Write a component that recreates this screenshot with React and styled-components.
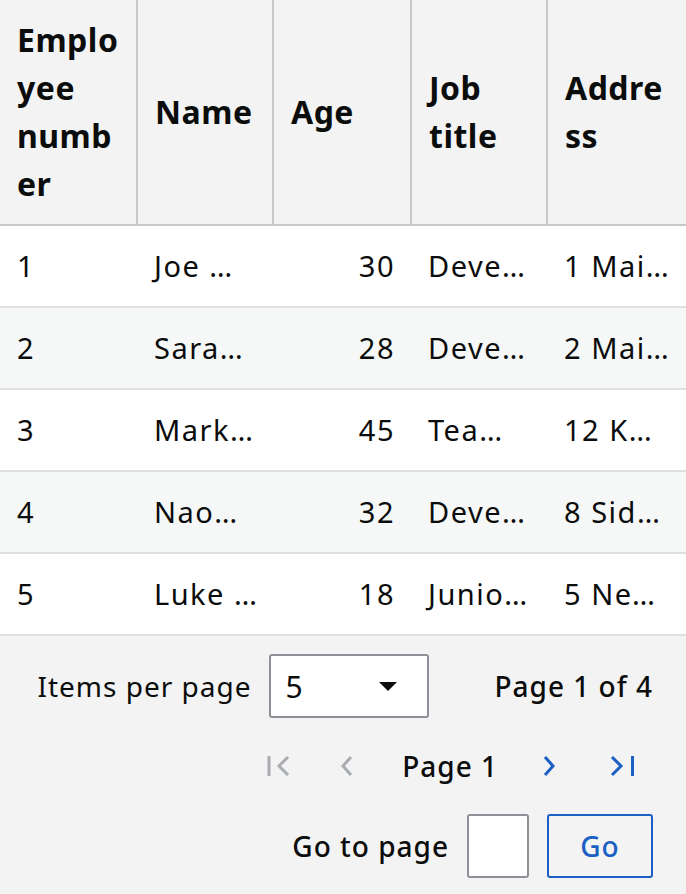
import React, { useState } from "react";
import styled, { createGlobalStyle } from "styled-components";

const GlobalStyle = createGlobalStyle`
  html, body {
    margin: 0;
    padding: 0;
    background: #f3f3f3;
  }
  body {
    font-family: "Noto Sans", "Open Sans", sans-serif;
    color: #0b0c0c;
  }
`;

const Wrapper = styled.div`
  width: 686px;
  height: 894px;
  overflow: hidden;
  background: #f3f3f3;
`;

const Table = styled.table`
  width: 100%;
  table-layout: fixed;
  border-collapse: collapse;
`;

const HeadCell = styled.th`
  height: 192px;
  padding: 16px 16px 16px 17px;
  text-align: left;
  vertical-align: middle;
  font-size: 32px;
  line-height: 48px;
  font-weight: 700;
  letter-spacing: 0.5px;
  background: #f3f3f3;
  border-bottom: 2px solid #c6c9cc;
  border-right: ${(p) => (p.last ? "none" : "2px solid #c6c9cc")};
  overflow-wrap: anywhere;
  word-break: break-word;
`;

const Row = styled.tr`
  background: ${(p) => (p.striped ? "#f6f8f7" : "#ffffff")};
  border-bottom: 2px solid #dfe1e0;
`;

const Cell = styled.td`
  height: 80px;
  padding: 0 ${(p) => p.pr || 16}px 0 17px;
  font-size: 29px;
  line-height: 40px;
  letter-spacing: 1.5px;
  text-align: ${(p) => (p.numeric ? "right" : "left")};
  white-space: nowrap;
  overflow: hidden;
  text-overflow: ellipsis;
`;

const Footer = styled.div`
  display: flex;
  flex-direction: column;
  align-items: flex-end;
  gap: 24px;
  padding: 18px 33px 16px 16px;
  font-size: 28px;
  letter-spacing: 1px;
`;

const FooterRow = styled.div`
  display: flex;
  align-items: center;
  justify-content: flex-end;
  gap: 18px;
`;

const Label = styled.span`
  font-weight: ${(p) => (p.medium ? 500 : 400)};
`;

const SelectBox = styled.div`
  box-sizing: border-box;
  width: 160px;
  height: 64px;
  display: flex;
  align-items: center;
  justify-content: space-between;
  padding: 0 30px 0 14px;
  background: #fff;
  border: 2px solid #8d9096;
  border-radius: 3px;
  font-size: 30px;
  margin-right: 47px;
`;

const Caret = styled.span`
  width: 0;
  height: 0;
  border-left: 9px solid transparent;
  border-right: 9px solid transparent;
  border-top: 9px solid #0b0c0c;
`;

const Nav = styled.div`
  display: flex;
  align-items: center;
  height: 48px;
  margin-right: 7px;
`;

const IconButton = styled.button`
  width: 48px;
  height: 48px;
  display: flex;
  align-items: center;
  justify-content: center;
  border: none;
  background: none;
  padding: 0;
  margin-left: ${(p) => p.ml || 0}px;
  color: ${(p) => (p.disabled ? "#a9adb1" : "#1c5fc4")};
`;

const PageText = styled.span`
  font-size: 28px;
  font-weight: 500;
  margin: 0 27px 0 31px;
`;

const PageInput = styled.input`
  box-sizing: border-box;
  width: 62px;
  height: 64px;
  border: 2px solid #8d9096;
  border-radius: 3px;
  background: #fff;
`;

const GoButton = styled.button`
  box-sizing: border-box;
  width: 106px;
  height: 64px;
  border: 2px solid #1c5fc4;
  border-radius: 3px;
  background: transparent;
  color: #1c5fc4;
  font-family: inherit;
  font-size: 28px;
  font-weight: 500;
  letter-spacing: 1px;
`;

const FirstIcon = () => (
  <svg width="24" height="22" viewBox="0 0 24 22">
    <path d="M2 1v20" stroke="currentColor" strokeWidth="3" fill="none" />
    <path d="M21 2l-9 9 9 9" stroke="currentColor" strokeWidth="3" fill="none" />
  </svg>
);

const PrevIcon = () => (
  <svg width="16" height="22" viewBox="0 0 16 22">
    <path d="M12 2l-8 9 8 9" stroke="currentColor" strokeWidth="3" fill="none" />
  </svg>
);

const NextIcon = () => (
  <svg width="16" height="22" viewBox="0 0 16 22">
    <path d="M4 2l8 9-8 9" stroke="currentColor" strokeWidth="3" fill="none" />
  </svg>
);

const LastIcon = () => (
  <svg width="26" height="22" viewBox="0 0 26 22">
    <path d="M3 2l9 9-9 9" stroke="currentColor" strokeWidth="3" fill="none" />
    <path d="M23.5 1v20" stroke="currentColor" strokeWidth="3" fill="none" />
  </svg>
);

const employees = [
  { id: 1, name: "Joe Wilson", age: 30, job: "Developer", address: "1 Main Street" },
  { id: 2, name: "Sarah Smith", age: 28, job: "Developer", address: "2 Main Street" },
  { id: 3, name: "Mark Jones", age: 45, job: "Team lead", address: "12 Kowloon Road" },
  { id: 4, name: "Naomi Brown", age: 32, job: "Developer", address: "8 Side Lane" },
  { id: 5, name: "Luke Green", age: 18, job: "Junior developer", address: "5 New Road" },
];

const columns = [
  { title: "Employee number", width: 137 },
  { title: "Name", width: 136 },
  { title: "Age", width: 138 },
  { title: "Job title", width: 136 },
  { title: "Address", width: 139 },
];

export default function App() {
  const [goTo, setGoTo] = useState("");

  return (
    <Wrapper>
      <GlobalStyle />
      <Table>
        <colgroup>
          {columns.map((c) => (
            <col key={c.title} width={c.width} />
          ))}
        </colgroup>
        <thead>
          <tr>
            {columns.map((c, i) => (
              <HeadCell key={c.title} last={i === columns.length - 1}>
                {c.title}
              </HeadCell>
            ))}
          </tr>
        </thead>
        <tbody>
          {employees.map((e, i) => (
            <Row key={e.id} striped={i % 2 === 1}>
              <Cell>{e.id}</Cell>
              <Cell>{e.name}</Cell>
              <Cell numeric>{e.age}</Cell>
              <Cell pr={18}>{e.job}</Cell>
              <Cell>{e.address}</Cell>
            </Row>
          ))}
        </tbody>
      </Table>
      <Footer>
        <FooterRow>
          <Label>Items per page</Label>
          <SelectBox>
            5
            <Caret />
          </SelectBox>
          <Label medium>Page 1 of 4</Label>
        </FooterRow>
        <Nav>
          <IconButton disabled>
            <FirstIcon />
          </IconButton>
          <IconButton disabled ml={20}>
            <PrevIcon />
          </IconButton>
          <PageText>Page 1</PageText>
          <IconButton>
            <NextIcon />
          </IconButton>
          <IconButton ml={25}>
            <LastIcon />
          </IconButton>
        </Nav>
        <FooterRow>
          <Label medium>Go to page</Label>
          <PageInput value={goTo} onChange={(e) => setGoTo(e.target.value)} />
          <GoButton>Go</GoButton>
        </FooterRow>
      </Footer>
    </Wrapper>
  );
}
